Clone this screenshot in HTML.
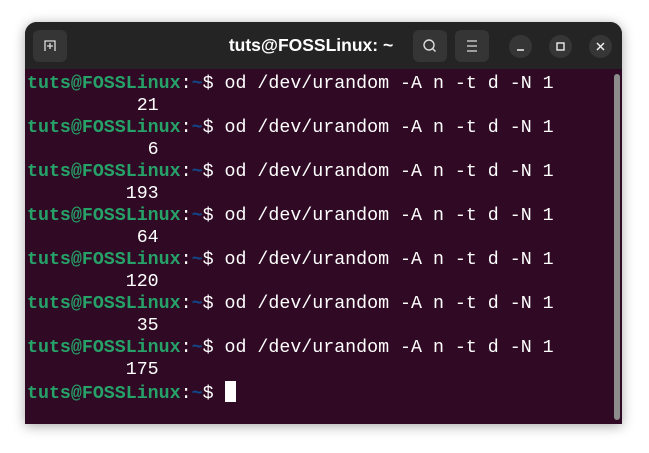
<!DOCTYPE html>
<html><head><style>
body{margin:0;width:649px;height:453px;background:#fff;overflow:hidden;position:relative;font-family:"Liberation Sans",sans-serif}
.win{position:absolute;left:25px;top:22px;width:597px;height:402px;border-radius:12px 12px 0 0;background:#300a24;box-shadow:0 2px 12px rgba(0,0,0,.35);overflow:hidden}
.tb{position:absolute;left:0;top:0;width:100%;height:47px;background:#242424}
.btn{position:absolute;top:8px;width:34px;height:32px;border-radius:6px;background:#353535}
.circ{position:absolute;top:13px;width:23px;height:23px;border-radius:50%;background:#363636}
.title{position:absolute;left:0;width:572px;text-align:center;top:13px;color:#fff;font-weight:bold;font-size:17.5px}
pre{position:absolute;left:2px;top:51px;margin:0;font-family:"Liberation Mono",monospace;font-size:18.3px;line-height:22px;color:#fff}
.g{color:#26a269;font-weight:bold}.b{color:#12488b;font-weight:bold}
.cur{display:inline-block;width:11px;height:21px;background:#fff;vertical-align:-4px}
.sb{position:absolute;left:589px;top:52px;width:6px;height:346px;border-radius:3px;background:#8c8c8c}
</style></head><body>
<div class="win">
<div class="tb">
<div class="btn" style="left:8px"><svg width="34" height="32"><path d="M12 21V11h10v10M14 16h6M17 13v6" stroke="#ddd" stroke-width="1.3" fill="none"/></svg></div>
<div class="title">tuts@FOSSLinux: ~</div>
<div class="btn" style="left:388px"><svg width="34" height="32"><circle cx="16" cy="15" r="5" stroke="#ddd" stroke-width="1.4" fill="none"/><path d="M19.5 18.5l3 3" stroke="#ddd" stroke-width="1.4"/></svg></div>
<div class="btn" style="left:430px"><svg width="34" height="32"><path d="M12 11h10M12 16h10M12 21h10" stroke="#ddd" stroke-width="1.3"/></svg></div>
<div class="circ" style="left:484px"><svg width="23" height="23"><path d="M8 15h7" stroke="#eee" stroke-width="1.5"/></svg></div>
<div class="circ" style="left:524px"><svg width="23" height="23"><rect x="8" y="8" width="7" height="7" stroke="#eee" stroke-width="1.4" fill="none"/></svg></div>
<div class="circ" style="left:564px"><svg width="23" height="23"><path d="M8 8l7 7M15 8l-7 7" stroke="#eee" stroke-width="1.5"/></svg></div>
</div>
<pre><span class="g">tuts@FOSSLinux</span>:<span class="b">~</span>$ od /dev/urandom -A n -t d -N 1
          21
<span class="g">tuts@FOSSLinux</span>:<span class="b">~</span>$ od /dev/urandom -A n -t d -N 1
           6
<span class="g">tuts@FOSSLinux</span>:<span class="b">~</span>$ od /dev/urandom -A n -t d -N 1
         193
<span class="g">tuts@FOSSLinux</span>:<span class="b">~</span>$ od /dev/urandom -A n -t d -N 1
          64
<span class="g">tuts@FOSSLinux</span>:<span class="b">~</span>$ od /dev/urandom -A n -t d -N 1
         120
<span class="g">tuts@FOSSLinux</span>:<span class="b">~</span>$ od /dev/urandom -A n -t d -N 1
          35
<span class="g">tuts@FOSSLinux</span>:<span class="b">~</span>$ od /dev/urandom -A n -t d -N 1
         175
<span class="g">tuts@FOSSLinux</span>:<span class="b">~</span>$ <span class="cur"></span></pre>
<div class="sb"></div>
</div>
</body></html>
